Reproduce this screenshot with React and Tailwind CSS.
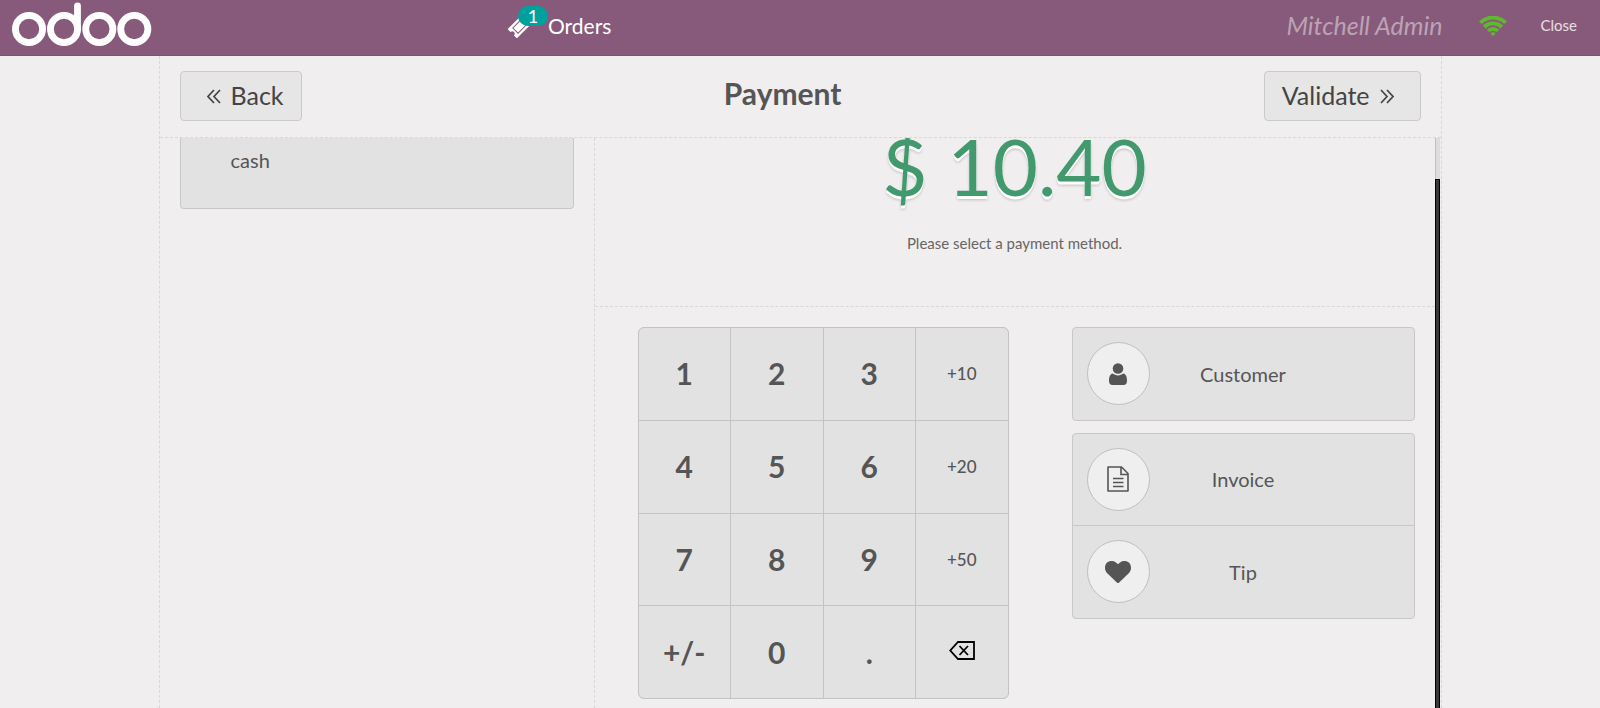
const keys = [
  "1", "2", "3", "+10",
  "4", "5", "6", "+20",
  "7", "8", "9", "+50",
  "+/-", "0", ".", "backspace",
];

function OdooLogo() {
  return (
    <svg
      width="140"
      height="46"
      viewBox="0 0 140 46"
      fill="none"
      stroke="#fff"
      strokeWidth="6.8"
      strokeLinecap="round"
      role="img"
      aria-label="odoo"
    >
      <circle cx="17" cy="29" r="13.6" />
      <circle cx="52" cy="29" r="13.6" />
      <circle cx="87.3" cy="29" r="13.6" />
      <circle cx="122.3" cy="29" r="13.6" />
      <path d="M65.5 5.8V29" />
    </svg>
  );
}

function TicketIcon() {
  return (
    <svg width="24" height="24" viewBox="0 0 24 24" aria-hidden="true">
      <g transform="rotate(-45 12 12)">
        <path
          fill="#fff"
          d="M1 5.500h22v4.100a2.400 2.400 0 0 0 0 4.800v4.100H1v-4.100a2.400 2.400 0 0 0 0-4.800z"
        />
        <path
          fill="none"
          stroke="#875a7b"
          strokeWidth="1"
          d="M5.500 8.300h13v7.400h-13z"
        />
      </g>
    </svg>
  );
}

function WifiIcon() {
  return (
    <svg
      width="28"
      height="20"
      viewBox="0 0 28 20"
      fill="none"
      stroke="#5fb82e"
      strokeWidth="3.9"
      role="img"
      aria-label="Connected"
    >
      <path d="M1.400 6.700a18 18 0 0 1 25.200 0" />
      <path d="M5.200 11a12.500 12.500 0 0 1 17.600 0" />
      <path d="M9.100 15a6.900 6.900 0 0 1 9.800 0" />
      <path
        fill="#5fb82e"
        stroke="none"
        d="M14 20c-.6 0-2.300-1.800-2.300-2.400 0-.8 1.300-1.300 2.300-1.300s2.300.5 2.300 1.300c0 .6-1.700 2.400-2.300 2.400z"
      />
    </svg>
  );
}

function AngleDouble({ right = false }) {
  return (
    <svg
      width="14"
      height="15"
      viewBox="0 0 14 15"
      fill="none"
      stroke="currentColor"
      strokeWidth="1.7"
      aria-hidden="true"
    >
      {right ? (
        <path d="M1 1l6 6.500-6 6.500M7 1l6 6.500-6 6.500" />
      ) : (
        <path d="M7 1L1 7.500 7 14M13 1L7 7.500l6 6.500" />
      )}
    </svg>
  );
}

function BackspaceIcon() {
  return (
    <svg
      width="26"
      height="19"
      viewBox="0 0 26 19"
      fill="none"
      stroke="#000"
      strokeWidth="1.8"
      className="mb-1"
      role="img"
      aria-label="Backspace"
    >
      <path d="M9 1h16v17H9L1.300 9.500z" />
      <path d="M10.500 5l8.500 9M19 5l-8.500 9" />
    </svg>
  );
}

function UserIcon() {
  return (
    <svg width="18" height="22" viewBox="0 0 18 22" fill="#555" aria-hidden="true">
      <circle cx="9" cy="5.500" r="5.300" />
      <path d="M3.700 10.600c3 2.400 7.600 2.400 10.600 0 2.500.4 3.700 3.200 3.700 7.400 0 2.500-1.300 4-3.500 4h-11C1.300 22 0 20.500 0 18c0-4.200 1.200-7 3.700-7.400z" />
    </svg>
  );
}

function FileIcon() {
  return (
    <svg
      width="22"
      height="26"
      viewBox="0 0 22 26"
      fill="none"
      stroke="#555"
      strokeWidth="1.6"
      aria-hidden="true"
    >
      <path d="M1 1h13.500l6.500 6.500V25H1z" strokeLinejoin="round" />
      <path d="M14 1v7.500h7" />
      <path d="M6 12.500h10.500M6 16.500h10.500M6 20.500h10.500" />
    </svg>
  );
}

function HeartIcon() {
  return (
    <svg width="26" height="22" viewBox="0 0 26 22" fill="#555" aria-hidden="true">
      <path d="M13 22c-.4 0-.7-.1-.9-.3L3 12.900C1.200 11.200 0 9.200 0 6.900 0 2.600 2.600 0 7 0c2.600 0 4.900 2 6 3.200C14.100 2 16.400 0 19 0c4.400 0 7 2.600 7 6.900 0 2.300-1.200 4.300-3 6l-9.100 8.800c-.2.200-.5.300-.9.300z" />
    </svg>
  );
}

function ActionButton({ icon, label }) {
  return (
    <button
      type="button"
      className="grid h-[92px] w-full grid-cols-[63px_1fr_63px] items-center px-3.5 pb-px text-xl"
    >
      <span className="flex size-[63px] items-center justify-center rounded-full border border-[#bfbfbf] bg-[#efefef]">
        {icon}
      </span>
      <span>{label}</span>
    </button>
  );
}

export default function App() {
  return (
    <div className="flex h-screen flex-col overflow-hidden bg-[#f0eeee] font-[Lato,sans-serif] text-[#555]">
      <header className="flex h-14 shrink-0 items-center border-b border-[#7d5272] bg-[#875a7b] pb-1 text-white">
        <div className="flex w-[31.5%] shrink-0 self-start pl-3">
          <OdooLogo />
        </div>
        <button type="button" className="relative flex items-center gap-4 pl-1 text-[21px]">
          <TicketIcon />
          <span className="absolute -top-1 left-3.5 flex h-5 w-[30px] items-center justify-center rounded-full bg-[#00a09d] text-lg">
            1
          </span>
          <span>Orders</span>
        </button>
        <div className="ml-auto flex items-center pr-[23px]">
          <span className="pr-9 text-[25px] italic text-white/45">
            Mitchell Admin
          </span>
          <WifiIcon />
          <button type="button" className="pl-[34px] text-[15px] text-white/80">
            Close
          </button>
        </div>
      </header>

      <main className="mx-auto flex min-h-0 w-full max-w-[1283px] flex-1 flex-col border-x border-dashed border-[#d8d8d8]">
        <div className="flex h-[82px] shrink-0 items-start justify-between border-b border-dashed border-[#d8d8d8] px-5 pt-[15px]">
          <button
            type="button"
            className="flex h-[50px] items-center gap-2.5 rounded border border-[#cacaca] bg-[#e6e6e6] pr-[17px] pl-[26px] text-[25px] text-[#444]"
          >
            <AngleDouble />
            Back
          </button>
          <h1 className="pt-1 text-[30px] leading-9 font-bold">Payment</h1>
          <button
            type="button"
            className="flex h-[50px] items-center gap-2.5 rounded border border-[#cacaca] bg-[#e6e6e6] pr-[26px] pl-[17px] text-[25px] text-[#444]"
          >
            Validate
            <AngleDouble right />
          </button>
        </div>

        <div className="flex min-h-0 flex-1">
          <section className="w-1/3 min-w-[435px] border-r border-dashed border-[#d8d8d8] px-5">
            <button
              type="button"
              className="flex h-[71px] w-full rounded-b border border-t-0 border-[#c8c8c8] bg-[#e2e2e2] pt-2 pl-[50px] text-xl"
            >
              cash
            </button>
          </section>

          <section className="flex min-w-0 flex-1 flex-col overflow-hidden">
            <div className="h-[169px] shrink-0 border-b border-dashed border-[#d8d8d8] text-center">
              <p className="-mt-2 text-[78px] leading-[72px] text-[#43996e] [text-shadow:0_3px_0_#fff,0_4px_3px_#0003]">
                $ 10.40
              </p>
              <p className="pt-[29px] text-[15px] leading-6 text-[#666]">
                Please select a payment method.
              </p>
            </div>
            <div className="flex items-start justify-between gap-8 pt-5 pr-5 pl-[43px]">
              <div className="grid h-[372px] w-[371px] shrink-0 grid-cols-4 grid-rows-4 gap-px overflow-hidden rounded-md border border-[#c3c3c3] bg-[#c3c3c3]">
                {keys.map((key) => (
                  <button
                    key={key}
                    type="button"
                    className={
                      key.length === 3 && key !== "+/-"
                        ? "flex items-center justify-center bg-[#e2e2e2] text-[17px] font-medium"
                        : "flex items-center justify-center bg-[#e2e2e2] text-[30px] font-bold"
                    }
                  >
                    {key === "backspace" ? <BackspaceIcon /> : key}
                  </button>
                ))}
              </div>
              <div className="flex w-[343px] flex-col gap-3">
                <div className="rounded border border-[#c8c8c8] bg-[#e2e2e2]">
                  <ActionButton icon={<UserIcon />} label="Customer" />
                </div>
                <div className="divide-y divide-[#c8c8c8] rounded border border-[#c8c8c8] bg-[#e2e2e2]">
                  <ActionButton icon={<FileIcon />} label="Invoice" />
                  <ActionButton icon={<HeartIcon />} label="Tip" />
                </div>
              </div>
            </div>
          </section>

          {/* scroll track and thumb */}
          <div className="mr-px flex w-[5px] flex-col border-l border-[#c0c0c0] bg-[#dedede] pt-[41px]">
            <div className="-ml-px flex-1 border-x border-t border-black bg-[#393939]" />
          </div>
        </div>
      </main>
    </div>
  );
}
